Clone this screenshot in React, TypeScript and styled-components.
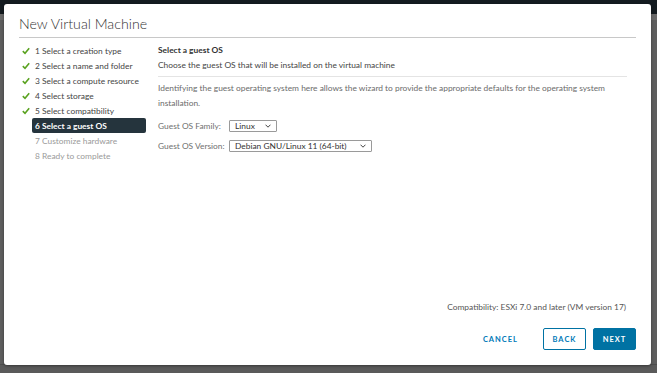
import React from "react";
import styled, { createGlobalStyle } from "styled-components";

const Global = createGlobalStyle`
  html, body { margin: 0; padding: 0; }
  body { font-family: Lato, "Liberation Sans", sans-serif; background: #5d5d5d; overflow: hidden; }
`;

const Page = styled.div`
  position: relative;
  width: 657px;
  height: 373px;
  background: #5e5e5e;
  display: flex;
  flex-direction: column;
`;

const TopBar = styled.div`
  height: 14px;
  background: #141b20;
`;

const SubBar = styled.div`
  height: 6px;
  background: #6a6a6a;
`;

const Spacer = styled.div`
  flex: 1;
`;

const BottomRow = styled.div`
  height: 8px;
  background: #5a5a5a;
  border-top: 1px solid #4d4d4d;
`;

const Modal = styled.div`
  position: absolute;
  left: 4px;
  top: 4px;
  width: 647px;
  height: 361px;
  background: #fff;
  border-radius: 3px;
  box-shadow: 0 1px 3px rgba(0, 0, 0, 0.4);
  display: flex;
  flex-direction: column;
  padding: 0 15px 0 15px;
  box-sizing: border-box;
`;

const Title = styled.h1`
  margin: 0;
  padding: 11px 0 5px 0;
  font-size: 14.2px;
  font-weight: 300;
  color: #333;
  border-bottom: 1px solid #c8c8c8;
  line-height: 17px;
`;

const Body = styled.div`
  flex: 1;
  display: flex;
  padding-top: 5px;
`;

const Steps = styled.ul`
  list-style: none;
  margin: 0;
  padding: 0 0 0 3px;
  width: 136px;
  flex: none;
  display: flex;
  flex-direction: column;
  align-items: flex-start;
`;

const Step = styled.li<{ $state: "done" | "active" | "todo" }>`
  height: 15px;
  display: flex;
  align-items: center;
  font-size: 8.4px;
  color: ${(p) => (p.$state === "todo" ? "#9a9a9a" : p.$state === "active" ? "#fff" : "#444")};
  font-weight: ${(p) => (p.$state === "active" ? 700 : 400)};
  background: ${(p) => (p.$state === "active" ? "#25343d" : "transparent")};
  border-radius: 2px;
  width: ${(p) => (p.$state === "done" ? "auto" : "111px")};
  padding-left: ${(p) => (p.$state === "done" ? "0" : "3px")};
  margin-left: ${(p) => (p.$state === "done" ? "0" : "10px")};
  white-space: nowrap;
`;

const Check = styled.svg`
  width: 8px;
  height: 8px;
  margin-right: 5px;
  flex: none;
`;

const Content = styled.div`
  flex: 1;
  display: flex;
  flex-direction: column;
  padding-right: 9px;
`;

const Heading = styled.div`
  font-size: 8.4px;
  font-weight: 700;
  color: #333;
  height: 15px;
  line-height: 15px;
`;

const Sub = styled.div`
  font-size: 8.4px;
  color: #444;
  height: 15px;
  line-height: 15px;
  padding-bottom: 3px;
  border-bottom: 1px solid #e4e4e4;
`;

const Para = styled.p`
  margin: 4px 0 0 0;
  font-size: 8.4px;
  line-height: 15px;
  color: #6b6b6b;
`;

const FieldRow = styled.div<{ $top: number }>`
  display: flex;
  align-items: center;
  margin-top: ${(p) => p.$top}px;
  height: 13px;
`;

const Label = styled.span<{ $w: number }>`
  font-size: 8.4px;
  color: #707070;
  width: ${(p) => p.$w}px;
  flex: none;
`;

const Select = styled.div<{ $w: number }>`
  width: ${(p) => p.$w}px;
  height: 12px;
  box-sizing: border-box;
  border: 1px solid #9a9a9a;
  border-radius: 1px;
  display: flex;
  align-items: center;
  justify-content: space-between;
  padding: 0 5px 0 5px;
  font-size: 8.4px;
  color: #333;
  background: #fff;
`;

const Chevron = styled.svg`
  width: 6px;
  height: 4px;
`;

const Footer = styled.div`
  display: flex;
  flex-direction: column;
  align-items: flex-end;
  padding-bottom: 15px;
`;

const Compat = styled.div`
  font-size: 8.4px;
  color: #555;
  padding-right: 10px;
  margin-bottom: 16px;
`;

const Buttons = styled.div`
  display: flex;
  gap: 7px;
  align-items: center;
`;

const Btn = styled.button<{ $kind: "link" | "outline" | "primary" }>`
  height: 22px;
  box-sizing: border-box;
  padding: 0 ${(p) => (p.$kind === "link" ? "9px" : "0")};
  width: ${(p) => (p.$kind === "link" ? "auto" : "43px")};
  font-family: Lato, "Liberation Sans", sans-serif;
  font-size: 7.5px;
  font-weight: 700;
  letter-spacing: 1px;
  border-radius: 2px;
  cursor: pointer;
  color: ${(p) => (p.$kind === "primary" ? "#fff" : "#0079b8")};
  background: ${(p) => (p.$kind === "primary" ? "#0072a3" : "#fff")};
  border: 1px solid ${(p) => (p.$kind === "link" ? "transparent" : "#0072a3")};
  margin-right: ${(p) => (p.$kind === "link" ? "8px" : "0")};
`;

const steps: { n: string; s: "done" | "active" | "todo" }[] = [
  { n: "1 Select a creation type", s: "done" },
  { n: "2 Select a name and folder", s: "done" },
  { n: "3 Select a compute resource", s: "done" },
  { n: "4 Select storage", s: "done" },
  { n: "5 Select compatibility", s: "done" },
  { n: "6 Select a guest OS", s: "active" },
  { n: "7 Customize hardware", s: "todo" },
  { n: "8 Ready to complete", s: "todo" },
];

const Down = () => (
  <Chevron viewBox="0 0 6 4">
    <path d="M0.5 0.7 L3 3.2 L5.5 0.7" stroke="#444" strokeWidth="1" fill="none" />
  </Chevron>
);

export default function App() {
  return (
    <Page>
      <Global />
      <TopBar />
      <SubBar />
      <Spacer />
      <BottomRow />
      <Modal>
        <Title>New Virtual Machine</Title>
        <Body>
          <Steps>
            {steps.map((st) => (
              <Step key={st.n} $state={st.s}>
                {st.s === "done" && (
                  <Check viewBox="0 0 8 8">
                    <path d="M0.8 4.2 L3 6.3 L7.2 1.3" stroke="#5aa220" strokeWidth="1.6" fill="none" />
                  </Check>
                )}
                {st.n}
              </Step>
            ))}
          </Steps>
          <Content>
            <Heading>Select a guest OS</Heading>
            <Sub>Choose the guest OS that will be installed on the virtual machine</Sub>
            <Para>
              Identifying the guest operating system here allows the wizard to provide the appropriate defaults for the
              operating system installation.
            </Para>
            <FieldRow $top={8}>
              <Label $w={71}>Guest OS Family:</Label>
              <Select $w={48}>
                Linux
                <Down />
              </Select>
            </FieldRow>
            <FieldRow $top={7}>
              <Label $w={71}>Guest OS Version:</Label>
              <Select $w={143}>
                Debian GNU/Linux 11 (64-bit)
                <Down />
              </Select>
            </FieldRow>
            <Spacer />
          </Content>
        </Body>
        <Footer>
          <Compat>Compatibility: ESXi 7.0 and later (VM version 17)</Compat>
          <Buttons>
            <Btn $kind="link">CANCEL</Btn>
            <Btn $kind="outline">BACK</Btn>
            <Btn $kind="primary">NEXT</Btn>
          </Buttons>
        </Footer>
      </Modal>
    </Page>
  );
}
